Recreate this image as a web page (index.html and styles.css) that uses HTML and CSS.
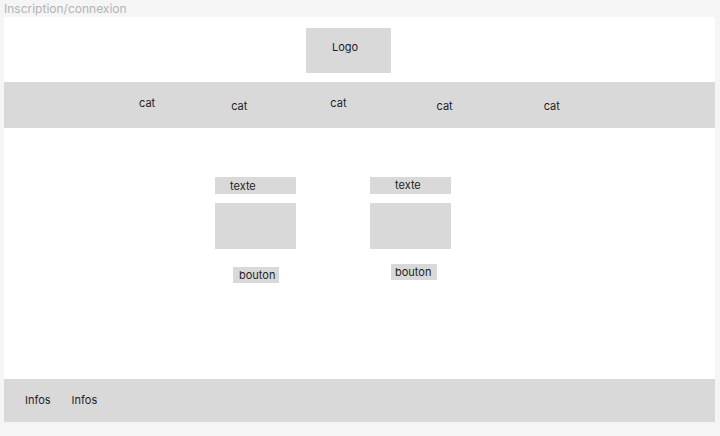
FILE: index.html
```html
<!DOCTYPE html>
<html lang="fr">
<head>
  <meta charset="UTF-8" />
  <title>Maquette</title>
  <link rel="stylesheet" href="styles.css">
</head>
<body>
  <div class="frame-label">Inscription/connexion</div>

  <div class="frame">
    <header class="header">
      <div class="logo">Logo</div>
    </header>

    <nav class="nav">
      <span class="cat cat-1">cat</span>
      <span class="cat cat-2">cat</span>
      <span class="cat cat-3">cat</span>
      <span class="cat cat-4">cat</span>
      <span class="cat cat-5">cat</span>
    </nav>

    <main class="main">
      <div class="card card-left">
        <div class="card-title">texte</div>
        <div class="card-img"></div>
        <div class="card-btn">bouton</div>
      </div>
      <div class="card card-right">
        <div class="card-title">texte</div>
        <div class="card-img"></div>
        <div class="card-btn">bouton</div>
      </div>
    </main>

    <footer class="footer">
      <span>Infos</span>
      <span>Infos</span>
    </footer>
  </div>
</body>
</html>
```

FILE: styles.css
```css
* {
  box-sizing: border-box;
  font-family: 'Inter', sans-serif;
}

body {
  margin: 0;
  background: #f5f5f5;
  color: #1e1e1e;
  font-size: 11px;
}

.frame-label {
  height: 17px;
  padding-left: 4px;
  line-height: 18px;
  font-size: 12px;
  color: #b3b3b3;
}

.frame {
  margin-left: 4px;
  width: 711px;
  background: #ffffff;
}

.header {
  height: 65px;
  padding-top: 11px;
  padding-left: 302px;
}

.logo {
  width: 85px;
  height: 45px;
  background: #d9d9d9;
  padding-left: 26px;
  padding-top: 12px;
  line-height: 14px;
}

.nav {
  height: 46px;
  background: #d9d9d9;
  display: flex;
  align-items: flex-start;
}

.cat {
  line-height: 14px;
  margin-top: 17px;
}

.cat-1 { margin-left: 135px; margin-top: 14px; }
.cat-2 { margin-left: 76px; }
.cat-3 { margin-left: 83px; margin-top: 14px; }
.cat-4 { margin-left: 90px; }
.cat-5 { margin-left: 91px; }

.main {
  height: 251px;
  display: flex;
  gap: 74px;
  padding-left: 211px;
  padding-top: 49px;
}

.card {
  width: 81px;
  display: flex;
  flex-direction: column;
}

.card-title {
  height: 17px;
  background: #d9d9d9;
  line-height: 17px;
}

.card-img {
  height: 46px;
  margin-top: 9px;
  background: #d9d9d9;
}

.card-btn {
  width: 46px;
  height: 16px;
  background: #d9d9d9;
  line-height: 16px;
}

.card-left .card-title { padding-left: 15px; line-height: 18px; }
.card-left .card-btn { margin-top: 18px; margin-left: 18px; padding-left: 6px; }

.card-right .card-title { padding-left: 25px; line-height: 16px; }
.card-right .card-btn { margin-top: 15px; margin-left: 21px; padding-left: 4px; }

.footer {
  height: 43px;
  background: #d9d9d9;
  display: flex;
  gap: 21px;
  align-items: center;
  padding-left: 21px;
  padding-bottom: 2px;
}
```
